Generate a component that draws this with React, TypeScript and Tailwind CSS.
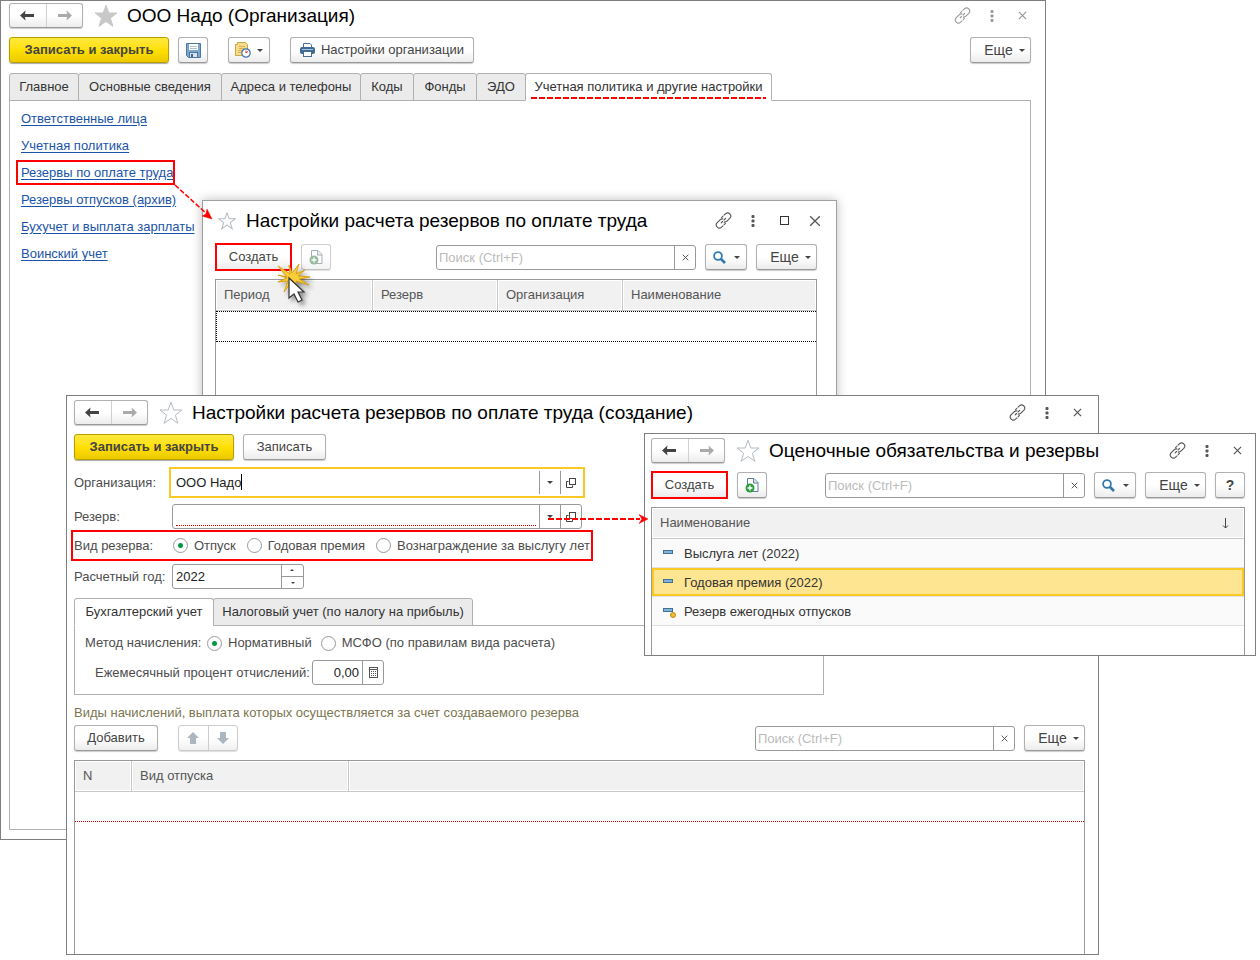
import type { ReactNode } from "react";
import clsx from "clsx";

const buttonBase =
  "flex h-[26px] shrink-0 items-center justify-center rounded-[3px] border border-[#b0b0b0] border-b-[#999] bg-linear-to-b from-white from-50% to-[#ececec] text-[#444] shadow-[0_1px_1px_#ccc]";

/* ---------- icons ---------- */

function NavArrow({ flip }: { flip?: boolean }) {
  return (
    <svg width="15" height="11" viewBox="0 0 15 11" aria-hidden="true">
      <path
        d={flip ? "M15 5.5 9.5 0.5 10 4H1v3h9l-.5 3.5Z" : "M0 5.5 5.5 0.5 5 4h9v3H5l.5 3.5Z"}
        fill="currentColor"
      />
    </svg>
  );
}

function Star({ filled, small }: { filled?: boolean; small?: boolean }) {
  return (
    <svg
      width={small ? 18 : 24}
      height={small ? 18 : 24}
      viewBox="0 0 24 24"
      className="shrink-0"
      fill={filled ? "#c8c8c8" : "#fff"}
      stroke={filled ? "#c8c8c8" : "#b4bcc4"}
      strokeWidth={small ? 1.4 : 1}
      aria-hidden="true"
    >
      <path d="M12 1.2 14.8 9H23l-6.6 5.1 2.5 8.2L12 17.4l-6.9 4.9 2.5-8.2L1 9h8.2Z" />
    </svg>
  );
}

function LinkIcon() {
  return (
    <svg width="17" height="17" viewBox="0 0 17 17" fill="none" stroke="currentColor" strokeWidth="1.1" strokeLinecap="round" aria-hidden="true">
      <path d="M6.6 5.6 7.8 4.400M9 3.200l1.400-1.300c1.400-1.300 3.200-1.200 4.400 0s1.300 3 0 4.400l-2.900 2.900c-.8.8-1.800 1.100-2.700.9" />
      <path d="M10.400 11.400 9.200 12.600M8 13.800l-1.400 1.300c-1.400 1.300-3.200 1.200-4.400 0s-1.300-3 0-4.400l2.900-2.900c.8-.8 1.800-1.100 2.700-.9" />
      <path d="m6.200 10.800 1.300-1.300M9 8l1.600-1.600" />
    </svg>
  );
}

function DotsIcon() {
  return (
    <svg width="4" height="12" viewBox="0 0 4 12" fill="currentColor" aria-hidden="true">
      <rect x="0.5" y="0" width="3" height="3" rx="1" />
      <rect x="0.5" y="4.5" width="3" height="3" rx="1" />
      <rect x="0.5" y="9" width="3" height="3" rx="1" />
    </svg>
  );
}

function Cross({ size }: { size: number }) {
  return (
    <svg width={size} height={size} viewBox="0 0 10 10" stroke="currentColor" strokeWidth={size > 9 ? 1.1 : 1.3} aria-hidden="true">
      <path d="m1 1 8 8M9 1 1 9" />
    </svg>
  );
}

function Caret() {
  return (
    <svg width="6" height="3" viewBox="0 0 6 3" aria-hidden="true">
      <path d="M0 0h6L3 3Z" fill="#444" />
    </svg>
  );
}

function SpinCaret() {
  return (
    <svg width="4" height="2" viewBox="0 0 4 2" aria-hidden="true">
      <path d="M0 0h4L2 2Z" fill="#444" />
    </svg>
  );
}

function FloppyIcon() {
  return (
    <svg width="15" height="15" viewBox="0 0 15 15" aria-hidden="true">
      <path d="M.5.5h14v14h-12l-2-2Z" fill="#7ba6cd" stroke="#4a76a0" />
      <rect x="3" y="1" width="9" height="6" fill="#fff" />
      <path d="M4 3.5h7M4 5.5h7" stroke="#aebfce" />
      <rect x="3.5" y="9.5" width="8" height="5" fill="#d8e2ea" stroke="#4a76a0" />
      <rect x="5" y="11" width="2" height="3" fill="#3d6a94" />
    </svg>
  );
}

function ScheduleIcon() {
  return (
    <svg width="16" height="16" viewBox="0 0 16 16" aria-hidden="true">
      <path d="M2.5.5h8l2 2v11H.5V2.5h2Z" fill="#f7dc8c" stroke="#cda445" />
      <path d="M4 4.5h6M4 6.5h5M3 8.5h4M3 10.5h3" stroke="#d8b154" />
      <circle cx="11" cy="11" r="4.2" fill="#fff" stroke="#3e73ab" strokeWidth="1.2" />
      <path d="M11 8.5V11l2-1.5" fill="none" stroke="#d3362d" />
    </svg>
  );
}

function PrinterIcon() {
  return (
    <svg width="15" height="14" viewBox="0 0 15 14" aria-hidden="true">
      <path d="M3.5 5V.5H10L11.5 2v3" fill="#fff" stroke="#486f92" />
      <rect x="0" y="4" width="15" height="7" rx="2" fill="#3e6b93" />
      <path d="M2 6.500h11" stroke="#a9c3d9" />
      <rect x="3.5" y="8.5" width="8" height="5" fill="#fff" stroke="#486f92" />
    </svg>
  );
}

function CopyIcon() {
  return (
    <svg width="14" height="16" viewBox="0 0 14 16" aria-hidden="true">
      <path d="M2.5 1.5H9l4 4v9H2.5Z" fill="#fff" stroke="#5b7d9d" />
      <path d="M8.5 1.500V6H13" fill="#dce5ec" stroke="#5b7d9d" />
      <circle cx="5" cy="11" r="4.500" fill="#2f9e41" />
      <path d="M2.500 11h5M5 8.500v5" stroke="#fff" strokeWidth="1.400" />
    </svg>
  );
}

function SearchIcon() {
  return (
    <svg width="13" height="13" viewBox="0 0 13 13" fill="none" stroke="#3279b0" aria-hidden="true">
      <circle cx="5" cy="5" r="3.9" strokeWidth="1.800" />
      <path d="m8 8 4 4" strokeWidth="2.600" />
    </svg>
  );
}

function OpenIcon() {
  return (
    <svg width="10" height="10" viewBox="0 0 10 10" fill="none" stroke="#444" aria-hidden="true">
      <rect x="3.5" y="0.5" width="6" height="6" />
      <path d="M2.5 3.5h-2v6h6v-2" />
    </svg>
  );
}

function CalculatorIcon() {
  return (
    <svg width="9" height="11" viewBox="0 0 9 11" fill="none" stroke="#555" aria-hidden="true">
      <rect x="0.5" y="0.5" width="8" height="10" />
      <path d="M1 2.5h7" />
      <path d="M2 4.5h6M2 6.5h6M2 8.5h6" strokeDasharray="1 1" />
    </svg>
  );
}

function MoveArrow({ down }: { down?: boolean }) {
  return (
    <svg width="12" height="12" viewBox="0 0 12 12" fill="#aab7be" aria-hidden="true">
      <path d={down ? "M6 12 0 6h3V0h6v6h3Z" : "M6 0 0 6h3v6h6V6h3Z"} />
    </svg>
  );
}

function ItemIcon({ predefined }: { predefined?: boolean }) {
  return (
    <svg width="14" height="12" viewBox="0 0 14 12" aria-hidden="true">
      <rect x="0.5" y="2.5" width="9" height="3" fill="#7fb3d9" stroke="#44718f" />
      {predefined && <circle cx="10" cy="9" r="2.5" fill="#f3bd2c" stroke="#b98a1d" />}
    </svg>
  );
}

function ClickBurst() {
  return (
    <svg
      width="44"
      height="46"
      viewBox="0 0 44 46"
      className="pointer-events-none absolute top-[61px] left-[72px] drop-shadow-[3px_3px_2px_#0006]"
      aria-hidden="true"
    >
      <path
        d="M12 15 3 4l12 8-1-9 3 8 7-9-3 10 9-4-7 6 12 1-11 2 10 6-13-4 0 9-4-9-8 11 4-11-10 1 9-4-9-3Z"
        fill="#f9cd38"
        stroke="#dda112"
        strokeWidth="1"
      />
      <path d="M14 16v20l5-4 4 8 4-2-4-8h6Z" fill="#fff" stroke="#333" strokeWidth="1.2" />
    </svg>
  );
}

/* ---------- controls ---------- */

function NavButtons() {
  return (
    <div className="flex h-[25px] w-[74px] shrink-0 rounded-[3px] border border-[#b0b0b0] border-b-[#999] bg-linear-to-b from-white from-50% to-[#ececec] shadow-[0_1px_1px_#ccc]">
      <button type="button" aria-label="Назад" className="flex flex-1 items-center justify-center border-r border-[#d0d0d0] text-[#444]">
        <NavArrow />
      </button>
      <button type="button" aria-label="Вперед" className="flex flex-1 items-center justify-center text-[#aaa]">
        <NavArrow flip />
      </button>
    </div>
  );
}

function WindowIcons({ muted, maximize }: { muted?: boolean; maximize?: boolean }) {
  return (
    <div className={clsx("ml-auto flex shrink-0 items-center", muted ? "text-[#999]" : "text-[#555]")}>
      <button type="button" aria-label="Получить ссылку" className="flex w-[30px] justify-center">
        <LinkIcon />
      </button>
      <button type="button" aria-label="Меню" className="flex w-[30px] justify-center">
        <DotsIcon />
      </button>
      {maximize && (
        <button type="button" aria-label="Развернуть" className="flex w-8 justify-center">
          <span className="size-[9px] border border-[#333]" />
        </button>
      )}
      <button type="button" aria-label="Закрыть" className="flex w-[30px] justify-center">
        <Cross size={maximize ? 12 : 9} />
      </button>
    </div>
  );
}

function MoreButton() {
  return (
    <button type="button" className={clsx(buttonBase, "w-[61px] gap-[6px] pl-2 text-sm")}>
      Еще
      <Caret />
    </button>
  );
}

function PrimaryButton() {
  return (
    <button
      type="button"
      className="flex h-[26px] w-40 shrink-0 items-center justify-center rounded-[3px] border border-[#b89d00] bg-linear-to-b from-[#ffe93b] via-[#ffe000] to-[#ecca00] text-[13px] font-bold text-[#444] shadow-[0_1px_1px_#aaa]"
    >
      Записать и закрыть
    </button>
  );
}

function CreateButton() {
  return (
    <span className="-my-px flex shrink-0 border-2 border-[#f00]">
      <button type="button" className="h-6 w-[73px] bg-linear-to-b from-white from-50% to-[#ececec] text-[#444]">
        Создать
      </button>
    </span>
  );
}

function CopyButton({ disabled }: { disabled?: boolean }) {
  return (
    <button type="button" aria-label="Скопировать" disabled={disabled} className={clsx(buttonBase, "ml-[9px] w-[30px] disabled:opacity-60 disabled:grayscale-50")}>
      <CopyIcon />
    </button>
  );
}

function SearchBox() {
  return (
    <div className="ml-auto flex h-[25px] w-[260px] min-w-0 items-center rounded-[3px] border border-[#999] bg-white">
      <input aria-label="Поиск" placeholder="Поиск (Ctrl+F)" className="h-full min-w-0 flex-1 px-[2px] outline-none placeholder:text-[#bbb]" />
      <button type="button" aria-label="Очистить" className="flex h-full w-[21px] items-center justify-center border-l border-[#999] text-[#444]">
        <Cross size={7} />
      </button>
    </div>
  );
}

function SearchButton() {
  return (
    <button type="button" aria-label="Найти" className={clsx(buttonBase, "mx-[9px] w-[42px] gap-2")}>
      <SearchIcon />
      <Caret />
    </button>
  );
}

type TabItem = { label: string; width: string; marked?: boolean };

function Tabs({ items, active }: { items: TabItem[]; active: number }) {
  return (
    <div role="tablist" className="relative z-10 flex">
      {items.map((tab, i) => (
        <button
          key={tab.label}
          type="button"
          role="tab"
          aria-selected={i === active}
          className={clsx(
            "relative -mb-px h-7 shrink-0 rounded-t-[3px] border border-[#b0b0b0] whitespace-nowrap text-[#333]",
            i > 0 && "-ml-px",
            tab.width,
            i === active ? "border-b-white bg-white" : "bg-[#ebebeb]",
          )}
        >
          {tab.label}
          {tab.marked && (
            <span className="absolute inset-x-[5px] bottom-px h-[2px] bg-[repeating-linear-gradient(90deg,#f00_0_6px,transparent_6px_8px)]" />
          )}
        </button>
      ))}
    </div>
  );
}

function Radio({ name, label, checked }: { name: string; label: string; checked?: boolean }) {
  return (
    <label className="flex shrink-0 items-center gap-[6px] whitespace-nowrap">
      <input
        type="radio"
        name={name}
        defaultChecked={checked}
        className="size-[15px] appearance-none rounded-full border border-[#999] bg-white checked:bg-[radial-gradient(circle,#009a44_0_2px,transparent_3px)]"
      />
      {label}
    </label>
  );
}

function PickerButtons() {
  return (
    <>
      <button type="button" aria-label="Выбрать из списка" className="flex h-full w-[21px] items-center justify-center border-l border-[#999]">
        <Caret />
      </button>
      <button type="button" aria-label="Открыть" className="flex h-full w-[21px] items-center justify-center border-l border-[#999]">
        <OpenIcon />
      </button>
    </>
  );
}

function HeadCell({ children, className }: { children?: ReactNode; className?: string }) {
  return (
    <th
      className={clsx(
        "h-[31px] border-r border-b border-[#c8c8c8] bg-[#f1f1f1] px-2 text-left font-normal text-[#555] shadow-[inset_0_0_0_1px_#fff] last:border-r-0",
        className,
      )}
    >
      {children}
    </th>
  );
}

/* ---------- windows ---------- */

const links = [
  { label: "Ответственные лица" },
  { label: "Учетная политика" },
  { label: "Резервы по оплате труда", marked: true },
  { label: "Резервы отпусков (архив)" },
  { label: "Бухучет и выплата зарплаты" },
  { label: "Воинский учет" },
];

const mainTabs: TabItem[] = [
  { label: "Главное", width: "w-[70px]" },
  { label: "Основные сведения", width: "w-36" },
  { label: "Адреса и телефоны", width: "w-[140px]" },
  { label: "Коды", width: "w-[54px]" },
  { label: "Фонды", width: "w-16" },
  { label: "ЭДО", width: "w-[50px]" },
  { label: "Учетная политика и другие настройки", width: "w-[247px]", marked: true },
];

function OrganizationWindow() {
  return (
    <section className="absolute top-0 right-[214px] left-0 flex min-h-[840px] min-w-[800px] flex-col border border-[#7f7f7f] bg-white px-2 pt-[2px] pb-[9px]">
      <header className="flex h-[25px] items-center">
        <NavButtons />
        <span className="mr-[9px] ml-[11px]">
          <Star filled />
        </span>
        <h1 className="text-[19px] whitespace-nowrap text-black">ООО Надо (Организация)</h1>
        <WindowIcons muted />
      </header>
      <div className="mt-[9px] flex items-center pr-[6px]">
        <PrimaryButton />
        <button type="button" aria-label="Записать" className={clsx(buttonBase, "ml-[9px] w-[30px]")}>
          <FloppyIcon />
        </button>
        <button type="button" aria-label="Напоминания" className={clsx(buttonBase, "ml-5 w-[42px] gap-[6px]")}>
          <ScheduleIcon />
          <Caret />
        </button>
        <button type="button" className={clsx(buttonBase, "mr-auto ml-5 w-[184px] gap-[6px]")}>
          <PrinterIcon />
          Настройки организации
        </button>
        <MoreButton />
      </div>
      <div className="mt-[10px] mr-[6px] flex flex-1 flex-col">
        <Tabs items={mainTabs} active={6} />
        <nav className="flex flex-1 flex-col items-start border border-[#b0b0b0] px-[11px] pt-1">
          {links.map((link) => (
            <a key={link.label} href="#" className="relative h-[27px] leading-[27px] text-[#1a54a8] underline underline-offset-2">
              {link.label}
              {link.marked && <span className="absolute top-px -right-[2px] -left-[5px] h-[25px] border-2 border-[#f00]" />}
            </a>
          ))}
        </nav>
      </div>
    </section>
  );
}

function ReserveListWindow() {
  return (
    <section className="absolute top-[200px] right-[423px] left-[202px] flex min-h-[220px] min-w-[600px] flex-col border border-[#a0a0a0] bg-white pt-[7px] pr-[19px] pl-3 shadow-[0_0_10px_#0004]">
      <header className="-mr-[13px] flex h-[25px] items-center pl-[3px]">
        <Star small />
        <h2 className="ml-[10px] text-[19px] whitespace-nowrap text-black">Настройки расчета резервов по оплате труда</h2>
        <WindowIcons maximize />
      </header>
      <div className="mt-[11px] flex items-center">
        <CreateButton />
        <CopyButton disabled />
        <SearchBox />
        <SearchButton />
        <MoreButton />
      </div>
      <div className="mt-[9px] flex-1 border border-b-0 border-[#999]">
        <table className="w-full table-fixed border-separate border-spacing-0">
          <thead>
            <tr>
              <HeadCell className="w-[157px]">Период</HeadCell>
              <HeadCell className="w-[125px]">Резерв</HeadCell>
              <HeadCell className="w-[125px]">Организация</HeadCell>
              <HeadCell>Наименование</HeadCell>
            </tr>
          </thead>
          <tbody>
            <tr>
              <td colSpan={4} className="h-[31px] border border-r-0 border-dotted border-black" />
            </tr>
          </tbody>
        </table>
      </div>
      <ClickBurst />
    </section>
  );
}

function ReserveFormWindow() {
  return (
    <section className="absolute top-[395px] right-[161px] left-[66px] flex min-h-[560px] min-w-[860px] flex-col border border-[#7f7f7f] bg-white pt-1 pr-[13px] pl-[7px]">
      <header className="-mr-[7px] flex h-[25px] items-center">
        <NavButtons />
        <span className="mr-[9px] ml-[11px]">
          <Star />
        </span>
        <h2 className="text-[19px] whitespace-nowrap text-black">Настройки расчета резервов по оплате труда (создание)</h2>
        <WindowIcons />
      </header>
      <div className="mt-[9px] flex gap-[9px]">
        <PrimaryButton />
        <button type="button" className={clsx(buttonBase, "w-[83px]")}>
          Записать
        </button>
      </div>

      <div className="mt-[7px] flex items-center">
        <label htmlFor="organization" className="w-[95px] shrink-0">
          Организация:
        </label>
        <div className="relative flex h-[31px] w-[416px] items-center border-2 border-[#fac924] py-[2px] pr-[2px]">
          <input id="organization" defaultValue="ООО Надо" className="h-full min-w-0 flex-1 px-[5px] text-[#222] outline-none" />
          {/* text cursor */}
          <span className="absolute top-[5px] left-[70px] h-4 w-px bg-black" />
          <PickerButtons />
        </div>
      </div>
      <div className="mt-[6px] flex items-center">
        <label htmlFor="reserve" className="w-[98px] shrink-0">
          Резерв:
        </label>
        <div className="flex h-[25px] w-[410px] items-center rounded-[3px] border border-[#999]">
          <span className="h-full min-w-0 flex-1 px-[3px] pb-[2px]">
            <input id="reserve" className="h-full w-full border-b border-dotted border-[#d00] outline-none" />
          </span>
          <PickerButtons />
        </div>
      </div>
      <fieldset className="mt-px -ml-[3px] w-[522px] border-2 border-[#f00]">
        <div className="flex h-[27px] items-center pl-px">
          <span className="w-[99px] shrink-0">Вид резерва:</span>
          <div className="flex gap-[11px] whitespace-nowrap">
            <Radio name="kind" label="Отпуск" checked />
            <Radio name="kind" label="Годовая премия" />
            <Radio name="kind" label="Вознаграждение за выслугу лет" />
          </div>
        </div>
      </fieldset>
      <div className="mt-[3px] flex items-center">
        <label htmlFor="year" className="w-[98px] shrink-0 whitespace-nowrap">
          Расчетный год:
        </label>
        <div className="flex h-[25px] w-[132px] rounded-[3px] border border-[#999]">
          <input id="year" defaultValue="2022" className="min-w-0 flex-1 px-[3px] text-[#222] outline-none" />
          <div className="flex w-[22px] flex-col border-l border-[#999]">
            <button type="button" aria-label="Больше" className="flex flex-1 rotate-180 items-center justify-center border-t border-[#999]">
              <SpinCaret />
            </button>
            <button type="button" aria-label="Меньше" className="flex flex-1 items-center justify-center">
              <SpinCaret />
            </button>
          </div>
        </div>
      </div>

      <div className="mt-[9px] w-[750px]">
        <Tabs
          active={0}
          items={[
            { label: "Бухгалтерский учет", width: "w-[140px]" },
            { label: "Налоговый учет (по налогу на прибыль)", width: "w-[260px]" },
          ]}
        />
        <div className="border border-[#b0b0b0] px-[10px] pt-1 pb-[9px]">
          <div className="flex h-[26px] items-center">
            <span className="w-[122px] shrink-0 whitespace-nowrap">Метод начисления:</span>
            <div className="flex gap-[9px]">
              <Radio name="method" label="Нормативный" checked />
              <Radio name="method" label="МСФО (по правилам вида расчета)" />
            </div>
          </div>
          <div className="mt-1 flex h-[25px] items-center pl-[10px]">
            <label htmlFor="percent" className="w-[217px] shrink-0 whitespace-nowrap">
              Ежемесячный процент отчислений:
            </label>
            <div className="flex h-full w-[72px] items-center rounded-[3px] border border-[#999]">
              <input id="percent" defaultValue="0,00" className="h-full min-w-0 flex-1 px-[3px] text-right text-[#222] outline-none" />
              <button type="button" aria-label="Калькулятор" className="flex h-full w-[21px] items-center justify-center border-l border-[#999]">
                <CalculatorIcon />
              </button>
            </div>
          </div>
        </div>
      </div>

      <p className="mt-2 leading-5 text-[#7b7650]">Виды начислений, выплата которых осуществляется за счет создаваемого резерва</p>
      <div className="mt-[2px] flex items-center">
        <button type="button" className={clsx(buttonBase, "w-[84px]")}>
          Добавить
        </button>
        <div className="ml-5 flex h-[26px] w-[60px] shrink-0 rounded-[3px] border border-[#ccc] bg-linear-to-b from-white from-50% to-[#f0f0f0] shadow-[0_1px_1px_#ddd]">
          <button type="button" aria-label="Вверх" disabled className="flex flex-1 items-center justify-center border-r border-[#ccc]">
            <MoveArrow />
          </button>
          <button type="button" aria-label="Вниз" disabled className="flex flex-1 items-center justify-center">
            <MoveArrow down />
          </button>
        </div>
        <SearchBox />
        <span className="ml-[9px]">
          <MoreButton />
        </span>
      </div>
      <div className="mt-[9px] flex-1 border border-b-0 border-[#999]">
        <table className="w-full table-fixed border-separate border-spacing-0">
          <thead>
            <tr>
              <HeadCell className="w-[57px]">N</HeadCell>
              <HeadCell className="w-[217px]">Вид отпуска</HeadCell>
              <HeadCell />
            </tr>
          </thead>
          <tbody>
            <tr>
              <td colSpan={3} className="h-[30px] border-b border-dotted border-[#c00]" />
            </tr>
          </tbody>
        </table>
      </div>
    </section>
  );
}

const liabilities = [
  { name: "Выслуга лет (2022)" },
  { name: "Годовая премия (2022)", selected: true },
  { name: "Резерв ежегодных отпусков", predefined: true },
];

function LiabilitiesWindow() {
  return (
    <section className="absolute top-[433px] right-1 left-[644px] flex min-h-[223px] min-w-[590px] flex-col border border-[#7f7f7f] bg-white pt-1 pr-[10px] pl-[6px]">
      <header className="-mr-[7px] flex h-[25px] items-center">
        <NavButtons />
        <span className="mr-[9px] ml-[11px]">
          <Star />
        </span>
        <h2 className="text-[19px] whitespace-nowrap text-black">Оценочные обязательства и резервы</h2>
        <WindowIcons />
      </header>
      <div className="mt-[9px] flex items-center">
        <CreateButton />
        <CopyButton />
        <SearchBox />
        <SearchButton />
        <MoreButton />
        <button type="button" aria-label="Справка" className={clsx(buttonBase, "ml-[9px] w-[30px] text-sm font-bold")}>
          ?
        </button>
      </div>
      <div className="mt-[9px] flex-1 border border-b-0 border-[#999]">
        <table className="w-full table-fixed border-separate border-spacing-0">
          <thead>
            <tr>
              <HeadCell>
                <span className="flex items-center justify-between pr-[7px]">
                  Наименование
                  <svg width="7" height="11" viewBox="0 0 7 11" fill="none" stroke="#444" aria-hidden="true">
                    <path d="M3.5 0v10M1 7.500l2.500 2.500L6 7.500" />
                  </svg>
                </span>
              </HeadCell>
            </tr>
          </thead>
          <tbody>
            {liabilities.map((row) => (
              <tr key={row.name}>
                <td
                  className={clsx(
                    "h-[29px] border-b border-[#e2e2e2] pt-[2px] pl-[11px] text-[#333]",
                    row.selected ? "bg-[#fee591] shadow-[inset_0_0_0_2px_#fac924]" : "bg-[#fafafa]",
                  )}
                >
                  <span className="flex items-center gap-[7px]">
                    <ItemIcon predefined={row.predefined} />
                    {row.name}
                  </span>
                </td>
              </tr>
            ))}
          </tbody>
        </table>
      </div>
    </section>
  );
}

export default function App() {
  return (
    <main className="relative min-h-screen min-w-[1240px] overflow-hidden bg-white font-['Liberation_Sans',Arial,sans-serif] text-[13px] leading-4 text-[#4d4d4d]">
      <OrganizationWindow />
      <ReserveListWindow />
      <ReserveFormWindow />
      <LiabilitiesWindow />

      {/* callout arrows between the windows */}
      <svg width="40" height="38" viewBox="0 0 40 38" className="pointer-events-none absolute top-[184px] left-[174px]" fill="none" stroke="#f00" aria-hidden="true">
        <path d="m1 1 33 30" strokeWidth="1.5" strokeDasharray="5 2" />
        <path d="m38 35-10-3 4-2 1-5Z" fill="#f00" strokeWidth="0.5" />
      </svg>
      <svg width="101" height="10" viewBox="0 0 101 10" className="pointer-events-none absolute top-[514px] left-[548px]" fill="none" stroke="#f00" aria-hidden="true">
        <path d="M0 5h92" strokeWidth="2" strokeDasharray="6 2" />
        <path d="m100 5-9-4.500L94 5l-3 4.500Z" fill="#f00" strokeWidth="0.5" />
      </svg>
    </main>
  );
}
